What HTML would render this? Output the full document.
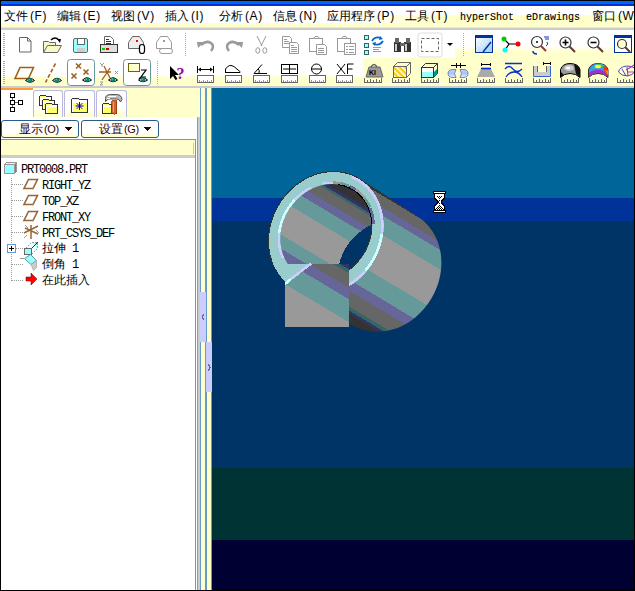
<!DOCTYPE html>
<html><head><meta charset="utf-8">
<style>
*{margin:0;padding:0;box-sizing:border-box}
html,body{width:635px;height:591px;overflow:hidden;background:#fff}
body{position:relative;font-family:"Liberation Sans",sans-serif;font-size:12px;color:#000}
.a{position:absolute}
.mi{position:absolute;top:9px;font-size:12px;line-height:14px;white-space:nowrap;letter-spacing:0.6px}
.mono{font-family:"Liberation Mono",monospace}
.tr{position:absolute;font-family:"Liberation Mono",monospace;font-size:12px;line-height:12px;letter-spacing:-1.2px;white-space:nowrap}
svg{position:absolute;overflow:visible}
.c{display:inline-block;width:12px;font-style:normal;text-align:center;letter-spacing:0}
</style></head><body>
<!-- frame -->
<div class="a" style="left:0;top:0;width:635px;height:1px;background:#000"></div>
<div class="a" style="left:1px;top:1px;width:633px;height:3px;background:#0066ff"></div>
<div class="a" style="left:1px;top:4px;width:633px;height:2px;background:#0033cc"></div>
<!-- menubar -->
<div class="a" style="left:1px;top:6px;width:633px;height:18px;background:#fff"></div>
<div class="a" style="left:1px;top:23px;width:633px;height:5px;background:#ffffcc"></div>
<div class="a" style="left:340px;top:15px;width:294px;height:8px;background:linear-gradient(90deg,rgba(255,255,204,0),#ffffcc 30%)"></div>
<div class="a" style="left:1px;top:27px;width:633px;height:1px;background:#ffdddd"></div>
<div class="a" style="left:1px;top:28px;width:633px;height:2px;background:#cccccc"></div>
<div class="mi" style="left:4px"><i class="c">文</i><i class="c">件</i><span style="margin-left:2px">(F)</span></div>
<div class="mi" style="left:57px"><i class="c">编</i><i class="c">辑</i><span style="margin-left:2px">(E)</span></div>
<div class="mi" style="left:111px"><i class="c">视</i><i class="c">图</i><span style="margin-left:2px">(V)</span></div>
<div class="mi" style="left:165px"><i class="c">插</i><i class="c">入</i><span style="margin-left:2px">(I)</span></div>
<div class="mi" style="left:219px"><i class="c">分</i><i class="c">析</i><span style="margin-left:2px">(A)</span></div>
<div class="mi" style="left:273px"><i class="c">信</i><i class="c">息</i><span style="margin-left:2px">(N)</span></div>
<div class="mi" style="left:327px"><i class="c">应</i><i class="c">用</i><i class="c">程</i><i class="c">序</i><span style="margin-left:2px">(P)</span></div>
<div class="mi" style="left:405px"><i class="c">工</i><i class="c">具</i><span style="margin-left:2px">(T)</span></div>
<div class="mi mono" style="left:460px;top:11px;font-size:10px;letter-spacing:0;-webkit-text-stroke:0.12px #000">hyperShot</div>
<div class="mi mono" style="left:526px;top:11px;font-size:10px;letter-spacing:0;-webkit-text-stroke:0.12px #000">eDrawings</div>
<div class="mi" style="left:592px"><i class="c">窗</i><i class="c">口</i><span style="margin-left:2px">(W)</span></div>
<!-- toolbars -->
<!-- TB -->
<svg style="left:0;top:0" width="635" height="88" viewBox="0 0 635 88">
<defs>
<linearGradient id="g1" x1="0" y1="0" x2="0" y2="1"><stop offset="0" stop-color="#fff"/><stop offset="0.55" stop-color="#fff"/><stop offset="0.8" stop-color="#ffffcc"/><stop offset="1" stop-color="#ffffcc"/></linearGradient>
<linearGradient id="g2" x1="0" y1="0" x2="0" y2="1"><stop offset="0" stop-color="#fff"/><stop offset="0.6" stop-color="#fff"/><stop offset="0.72" stop-color="#ffffcc"/><stop offset="1" stop-color="#ffffcc"/></linearGradient>
<linearGradient id="gb" x1="0" y1="0" x2="1" y2="1"><stop offset="0" stop-color="#fff"/><stop offset="1" stop-color="#99ccff"/></linearGradient>
<pattern id="chk" width="2" height="2" patternUnits="userSpaceOnUse"><rect width="2" height="2" fill="#ffff66"/><rect width="1" height="1" fill="#ffffcc"/><rect x="1" y="1" width="1" height="1" fill="#ffffcc"/></pattern>
<pattern id="hat" width="4" height="4" patternUnits="userSpaceOnUse" patternTransform="rotate(-45)"><rect width="4" height="4" fill="#ffcc00"/><rect width="1.6" height="4" fill="#fff"/></pattern>



</defs>
<!-- row1 bg -->
<rect x="1" y="30" width="454" height="28" fill="#fff"/>
<rect x="455" y="30" width="179" height="28" fill="url(#g1)"/>
<rect x="1" y="58" width="362" height="28" fill="url(#g2)"/>
<rect x="363" y="58" width="271" height="28" fill="#ffffcc"/>
<!-- grips / separators -->
<g fill="#cc9999">
<path d="M3,33h2v1h-2zM3,35h2v1h-2zM3,37h2v1h-2zM3,39h2v1h-2zM3,41h2v1h-2zM3,43h2v1h-2zM3,45h2v1h-2zM3,47h2v1h-2zM3,49h2v1h-2zM3,51h2v1h-2zM3,53h2v1h-2zM3,55h2v1h-2z"/>
<path d="M3,61h2v1h-2zM3,63h2v1h-2zM3,65h2v1h-2zM3,67h2v1h-2zM3,69h2v1h-2zM3,71h2v1h-2zM3,73h2v1h-2zM3,75h2v1h-2zM3,77h2v1h-2zM3,79h2v1h-2zM3,81h2v1h-2zM3,83h2v1h-2z"/>
<path d="M185,33h1v1h-1zM185,35h1v1h-1zM185,37h1v1h-1zM185,39h1v1h-1zM185,41h1v1h-1zM185,43h1v1h-1zM185,45h1v1h-1zM185,47h1v1h-1zM185,49h1v1h-1zM185,51h1v1h-1zM185,53h1v1h-1zM185,55h1v1h-1z"/>
<path d="M463,33h1v1h-1zM463,35h1v1h-1zM463,37h1v1h-1zM463,39h1v1h-1zM463,41h1v1h-1zM463,43h1v1h-1zM463,45h1v1h-1zM463,47h1v1h-1zM463,49h1v1h-1zM463,51h1v1h-1zM463,53h1v1h-1zM463,55h1v1h-1z"/>
<path d="M157,61h1v1h-1zM157,63h1v1h-1zM157,65h1v1h-1zM157,67h1v1h-1zM157,69h1v1h-1zM157,71h1v1h-1zM157,73h1v1h-1zM157,75h1v1h-1zM157,77h1v1h-1zM157,79h1v1h-1zM157,81h1v1h-1zM157,83h1v1h-1z"/>
</g>
<!-- ROW1 -->
<!-- new -->
<path d="M19.5,37.5h8l3.5,3.5v11h-11.5z" fill="#fff" stroke="#666"/><path d="M27.5,37.5v3.5h3.5" fill="none" stroke="#666"/>
<!-- open -->
<path d="M43.5,41.5h5l1,1h6v10h-12z" fill="url(#chk)" stroke="#666"/>
<path d="M43.5,52.5l4,-7h14l-4,7z" fill="url(#chk)" stroke="#666"/>
<path d="M51,40q4,-4 8,0" fill="none" stroke="#000" stroke-width="1.2"/><path d="M57,39l4,0l-1,4z" fill="#000"/>
<!-- save -->
<rect x="73.5" y="38.5" width="14" height="14" rx="1.5" fill="#99ffff" stroke="#666"/>
<rect x="77.5" y="38.5" width="7" height="6" fill="#fff" stroke="#666"/>
<rect x="77" y="48" width="8" height="4" fill="#ccc"/>
<!-- print -->
<path d="M104.5,36.5h6l3,3v6h-9z" fill="#fff" stroke="#666"/>
<path d="M106,39.5h3M106,41.5h5M106,43.5h5" stroke="#333"/>
<rect x="100.5" y="44.5" width="17" height="8" fill="#ddd" stroke="#333"/>
<rect x="102" y="48" width="3" height="2" fill="#00cc00"/><rect x="106" y="48" width="3" height="2" fill="#cc0000"/>
<!-- send -->
<path d="M128.5,42.5l4,-6h7l4,6v6h-15z" fill="#eee" stroke="#666"/>
<rect x="136" y="40" width="2" height="2" fill="#ff0000"/>
<rect x="139.5" y="44.5" width="5" height="9" rx="2.5" fill="#fff" stroke="#000" stroke-width="1.2"/>
<!-- grayed -->
<path d="M156.5,42.5l4,-6h7l4,6v6h-15z" fill="#fff" stroke="#999"/>
<rect x="163" y="40" width="2" height="2" fill="#999"/>
<rect x="159.5" y="48.5" width="13" height="5" rx="2.5" fill="#fff" stroke="#999"/>
<!-- undo / redo -->
<path d="M201,45q5,-5 10,-2q4,3 0,8" fill="none" stroke="#999" stroke-width="2.5"/><path d="M197,42l7,0l-6,6z" fill="#999"/>
<path d="M239,45q-5,-5 -10,-2q-4,3 0,8" fill="none" stroke="#999" stroke-width="2.5"/><path d="M243,42l-7,0l6,6z" fill="#999"/>
<!-- scissors -->
<path d="M257,36l5,10M266,36l-5,10" stroke="#999" stroke-width="1"/>
<ellipse cx="257.8" cy="50.5" rx="2" ry="2.8" fill="none" stroke="#999"/><ellipse cx="264.8" cy="50.5" rx="2" ry="2.8" fill="none" stroke="#999"/>
<!-- copy -->
<path d="M282.5,36.5h7l2,2v9h-9z" fill="#fff" stroke="#999"/><path d="M289.5,42.5h7l2,2v9h-9z" fill="#fff" stroke="#999"/>
<path d="M284,39.5h3M284,41.5h5M284,43.5h5M291,45.5h3M291,47.5h6M291,49.5h6M291,51.5h6" stroke="#999"/>
<!-- paste -->
<rect x="309.5" y="38.5" width="13" height="13" fill="#fff" stroke="#999"/><path d="M313.5,38.5l1.5,-2h3l1.5,2z" fill="#fff" stroke="#999"/>
<path d="M316.5,44.5h8l2,2v8h-10z" fill="#fff" stroke="#999"/><path d="M318,48.5h6M318,50.5h6M318,52.5h6" stroke="#999"/>
<rect x="337.5" y="38.5" width="13" height="13" fill="#fff" stroke="#999"/><path d="M341.5,38.5l1.5,-2h3l1.5,2z" fill="#fff" stroke="#999"/>
<rect x="344.5" y="43.5" width="11" height="11" fill="#fff" stroke="#999"/><path d="M346,46.5h2M346,49.5h2M346,52.5h2M349,46.5h5M349,49.5h5M349,52.5h5" stroke="#999"/>
<!-- regen -->
<rect x="364.5" y="35.5" width="4" height="4" fill="#99ffff" stroke="#336666"/><rect x="364.5" y="43.5" width="4" height="4" fill="#99ffff" stroke="#336666"/><rect x="364.5" y="50.5" width="4" height="4" fill="#99ffff" stroke="#336666"/>
<path d="M372,41q3,-5 9,-3M383,41q-3,5 -9,3" fill="none" stroke="#0066cc" stroke-width="1.8"/>
<path d="M380,36l3,3l-4,1zM375,46l-3,-3l4,-1z" fill="#0066cc"/>
<path d="M373,47.5h8M373,49.5h6M373,51.5h8" stroke="#999"/>
<!-- binoculars -->
<path d="M394,42h7v10h-7zM404,42h7v10h-7z" fill="#333"/>
<path d="M395,38h4v5h-4zM406,38h4v5h-4zM400,43h5v3h-5z" fill="#666"/>
<path d="M395,44h2v7h-2zM405,44h2v7h-2z" fill="#ccc"/>
<!-- select box -->
<rect x="418" y="33" width="24" height="24" rx="2.5" fill="#fff" stroke="#ddd"/>
<rect x="421.5" y="38.5" width="17" height="13" fill="none" stroke="#666" stroke-dasharray="3,2"/>
<path d="M447,43h6l-3,3z" fill="#000"/>
<!-- repaint -->
<rect x="475.5" y="35.5" width="17" height="17" fill="url(#gb)" stroke="#003399"/>
<rect x="476" y="36" width="16" height="2" fill="#003399"/>
<path d="M483,52l8,-10" stroke="#003399" stroke-width="1.5"/>
<path d="M480,41h1M482,43h1M479,45h1M484,45h1M481,47h1M486,42h1" stroke="#fff"/>
<!-- spin center -->
<path d="M504,39l5,5l-4,6M509,44h9" stroke="#000" stroke-width="1.2" fill="none"/>
<circle cx="504" cy="39" r="2.5" fill="#00cc00"/><circle cx="518" cy="44" r="2.5" fill="#ff0000"/><circle cx="505" cy="50" r="2.5" fill="#00ffff"/>
<!-- orient -->
<circle cx="537" cy="42" r="5.5" fill="#fff" stroke="#333" stroke-width="1.2"/><circle cx="537" cy="42" r="1" fill="#000"/>
<path d="M541,46l5,5" stroke="#993333" stroke-width="2"/>
<path d="M544,37h5M545,39h4M547,42q2,2 -1,4" stroke="#0033cc" fill="none"/>
<path d="M533,51q0,3 4,3" stroke="#0033cc" fill="none" stroke-width="1.5"/>
<!-- zoom in/out -->
<circle cx="565.5" cy="42.5" r="5.5" fill="#fff" stroke="#333" stroke-width="1.2"/><path d="M562.5,42.5h6M565.5,39.5v6" stroke="#000" stroke-width="1.6"/><path d="M569.5,46.5l5.5,5.5" stroke="#663333" stroke-width="2"/>
<circle cx="593.5" cy="42.5" r="5.5" fill="#fff" stroke="#333" stroke-width="1.2"/><path d="M590.5,42.5h6" stroke="#000" stroke-width="1.6"/><path d="M597.5,46.5l5.5,5.5" stroke="#663333" stroke-width="2"/>
<!-- fit -->
<rect x="614.5" y="35.5" width="17" height="17" fill="#fff" stroke="#003399"/><rect x="615" y="36" width="16" height="2" fill="#003399"/>
<circle cx="622" cy="44" r="4.5" fill="#ffffcc" stroke="#333" stroke-width="1.2"/><path d="M625,47l5,5" stroke="#663333" stroke-width="2"/>
<!-- ROW2 -->
<!-- plane -->
<path d="M20,67.5h13.5l-5,11h-13.5z" fill="none" stroke="#a0601a" stroke-width="1.6"/>
<g transform="translate(25,77.5)"><path d="M0.5,3q4.5,-4.5 9,0q-4.5,3.5 -9,0z" fill="#ccc" stroke="#000" stroke-width="1"/><circle cx="5" cy="2.8" r="2.3" fill="#008877"/><circle cx="4.3" cy="2.2" r="0.7" fill="#66ccaa"/></g>
<!-- axis -->
<path d="M55.5,63.5l-10,19" stroke="#a0601a" stroke-width="1.6" stroke-dasharray="4,2"/>
<g transform="translate(52,77.5)"><path d="M0.5,3q4.5,-4.5 9,0q-4.5,3.5 -9,0z" fill="#ccc" stroke="#000" stroke-width="1"/><circle cx="5" cy="2.8" r="2.3" fill="#008877"/><circle cx="4.3" cy="2.2" r="0.7" fill="#66ccaa"/></g>
<!-- point btn -->
<rect x="67.5" y="59.5" width="27" height="26" rx="3" fill="#fff" stroke="#669999"/>
<path d="M76,63.5l5,5M81,63.5l-5,5M71.5,73.5l5,5M76.5,73.5l-5,5M83.5,69.5l5,5M88.5,69.5l-5,5" stroke="#a0601a" stroke-width="1.6"/>
<g transform="translate(82,77)"><path d="M0.5,3q4.5,-4.5 9,0q-4.5,3.5 -9,0z" fill="#ccc" stroke="#000" stroke-width="1"/><circle cx="5" cy="2.8" r="2.3" fill="#008877"/><circle cx="4.3" cy="2.2" r="0.7" fill="#66ccaa"/></g>
<!-- csys -->
<path d="M99,72h12M102,80l8,-12M104,66l6,12" stroke="#a0601a" stroke-width="1.3"/>
<path d="M100,63l2,2l2,-2M102,65v2M100,82h3l-3,3h3M115,71l3,3M118,71l-3,3" stroke="#999" fill="none"/>
<g transform="translate(108,77)"><path d="M0.5,3q4.5,-4.5 9,0q-4.5,3.5 -9,0z" fill="#ccc" stroke="#000" stroke-width="1"/><circle cx="5" cy="2.8" r="2.3" fill="#008877"/><circle cx="4.3" cy="2.2" r="0.7" fill="#66ccaa"/></g>
<!-- annot btn -->
<rect x="123.5" y="59.5" width="27" height="26" rx="3" fill="#fff" stroke="#669999"/>
<rect x="128.5" y="63.5" width="11" height="8" fill="#ffffcc" stroke="#666600"/>
<path d="M141,70h5l-5,7h5M141,77l-2,2" stroke="#000" fill="none" stroke-width="1.2"/>
<g transform="translate(138,77)"><path d="M0.5,3q4.5,-4.5 9,0q-4.5,3.5 -9,0z" fill="#ccc" stroke="#000" stroke-width="1"/><circle cx="5" cy="2.8" r="2.3" fill="#008877"/><circle cx="4.3" cy="2.2" r="0.7" fill="#66ccaa"/></g>
<!-- ? -->
<path d="M170,66v13l3,-3l2.5,4l2,-1l-2.5,-4h4z" fill="#000"/>
<text x="176.5" y="78.5" font-family="Liberation Serif" font-weight="bold" font-size="16" fill="#990099">?</text>
<!-- rulers -->
<g transform="translate(197,75)"><rect x="0.5" y="0.5" width="16" height="7" fill="#fff" stroke="#666"/><path d="M2.5,7v-2M4.5,7v-1M6.5,7v-2M8.5,7v-1M10.5,7v-2M12.5,7v-1M14.5,7v-2" stroke="#999" stroke-width="1"/></g><g transform="translate(225,75)"><rect x="0.5" y="0.5" width="16" height="7" fill="#fff" stroke="#666"/><path d="M2.5,7v-2M4.5,7v-1M6.5,7v-2M8.5,7v-1M10.5,7v-2M12.5,7v-1M14.5,7v-2" stroke="#999" stroke-width="1"/></g><g transform="translate(253,75)"><rect x="0.5" y="0.5" width="16" height="7" fill="#fff" stroke="#666"/><path d="M2.5,7v-2M4.5,7v-1M6.5,7v-2M8.5,7v-1M10.5,7v-2M12.5,7v-1M14.5,7v-2" stroke="#999" stroke-width="1"/></g><g transform="translate(281,75)"><rect x="0.5" y="0.5" width="16" height="7" fill="#fff" stroke="#666"/><path d="M2.5,7v-2M4.5,7v-1M6.5,7v-2M8.5,7v-1M10.5,7v-2M12.5,7v-1M14.5,7v-2" stroke="#999" stroke-width="1"/></g><g transform="translate(309,75)"><rect x="0.5" y="0.5" width="16" height="7" fill="#fff" stroke="#666"/><path d="M2.5,7v-2M4.5,7v-1M6.5,7v-2M8.5,7v-1M10.5,7v-2M12.5,7v-1M14.5,7v-2" stroke="#999" stroke-width="1"/></g><g transform="translate(336,75)"><rect x="0.5" y="0.5" width="16" height="7" fill="#fff" stroke="#666"/><path d="M2.5,7v-2M4.5,7v-1M6.5,7v-2M8.5,7v-1M10.5,7v-2M12.5,7v-1M14.5,7v-2" stroke="#999" stroke-width="1"/></g>
<path d="M197.5,66v7M213.5,66v7M199,69.5h13" stroke="#000" fill="none"/><path d="M198,69.5l3,-2v4zM213,69.5l-3,-2v4z" fill="#000"/>
<path d="M225.5,73v-4q4,-6 9,-2l6,5M226,72.5h14" stroke="#000" fill="none"/>
<path d="M254,73.5h13M254,73.5l8,-9" stroke="#000" fill="none"/><path d="M259,73q1,-3 -1,-4" stroke="#000" fill="none"/>
<rect x="281.5" y="64.5" width="16" height="9" fill="#fff" stroke="#000"/><path d="M289.5,64.5v9M283,69h13" stroke="#000"/>
<circle cx="316.5" cy="69" r="5" fill="none" stroke="#000"/><path d="M311.5,69h10" stroke="#000"/>
<path d="M337,64l8,10M345,64l-8,10M347.5,64v10M347.5,64h6M347.5,69h5" stroke="#000" fill="none"/>
<!-- weight -->
<path d="M366,77l3,-10h11l3,10z" fill="#999" stroke="#666"/><path d="M371,67q3,-5 6,0" fill="none" stroke="#666" stroke-width="1.5"/>
<text x="369" y="75" font-family="Liberation Sans" font-weight="bold" font-size="7" fill="#000">KI</text>
<g transform="translate(364,78)"><path d="M0.5,0v4M0,4.5h18M3.5,2v2M6.5,1v3M9.5,2v2M12.5,1v3M15.5,2v2M17.5,0v4" stroke="#666" stroke-width="1" fill="none"/></g>
<!-- hatched cube -->
<rect x="393.5" y="66.5" width="13" height="11" fill="url(#hat)" stroke="#666"/>
<path d="M393.5,66.5l4,-4h13v11l-4,4M406.5,66.5l4,-4" fill="none" stroke="#666"/>
<g transform="translate(392,78)"><path d="M0.5,0v4M0,4.5h18M3.5,2v2M6.5,1v3M9.5,2v2M12.5,1v3M15.5,2v2M17.5,0v4" stroke="#666" stroke-width="1" fill="none"/></g>
<!-- cube cyan -->
<rect x="421.5" y="67.5" width="12" height="10" fill="#fff" stroke="#333"/><rect x="422" y="72" width="11" height="5" fill="#99ffff"/>
<path d="M421.5,67.5l4,-4h12v10l-4,4M433.5,67.5l4,-4" fill="none" stroke="#333"/><path d="M434,72l3,-3v5l-3,3z" fill="#009999"/>
<g transform="translate(421,78)"><path d="M0.5,0v4M0,4.5h18M3.5,2v2M6.5,1v3M9.5,2v2M12.5,1v3M15.5,2v2M17.5,0v4" stroke="#666" stroke-width="1" fill="none"/></g>
<!-- clearance -->
<defs><linearGradient id="lb" x1="0" y1="0" x2="0" y2="1"><stop offset="0" stop-color="#ccccff"/><stop offset="0.5" stop-color="#99ccff"/><stop offset="1" stop-color="#eeeeff"/></linearGradient></defs>
<path d="M456,69.5h-3q-5,0 -5,4q0,4 5,4h3q-3,-4 0,-8z" fill="url(#lb)" stroke="#666699" stroke-width="0.8"/>
<path d="M460,69.5h3q5,0 5,4q0,4 -5,4h-3q3,-4 0,-8z" fill="url(#lb)" stroke="#666699" stroke-width="0.8"/>
<path d="M451,65.5h15M456.5,63v5M460.5,63v5" stroke="#000"/>
<g transform="translate(449,78)"><path d="M0.5,0v4M0,4.5h18M3.5,2v2M6.5,1v3M9.5,2v2M12.5,1v3M15.5,2v2M17.5,0v4" stroke="#666" stroke-width="1" fill="none"/></g>
<!-- draft -->
<path d="M481,69h10l4,8h-18z" fill="#aaa"/><path d="M481,68.5h10" stroke="#0033cc" stroke-width="1.6"/><path d="M481.5,63v3M490.5,63v3M481,64.5h10" stroke="#000"/>
<g transform="translate(477,78)"><path d="M0.5,0v4M0,4.5h18M3.5,2v2M6.5,1v3M9.5,2v2M12.5,1v3M15.5,2v2M17.5,0v4" stroke="#666" stroke-width="1" fill="none"/></g>
<!-- curvature -->
<path d="M505,63.5h17M505,69q4,-5 8,0t9,0M506,77q3,-5 8,-5q5,0 8,5" stroke="#0033cc" fill="none" stroke-width="1.3"/>
<g transform="translate(505,78)"><path d="M0.5,0v4M0,4.5h18M3.5,2v2M6.5,1v3M9.5,2v2M12.5,1v3M15.5,2v2M17.5,0v4" stroke="#666" stroke-width="1" fill="none"/></g>
<!-- pocket -->
<path d="M534,66h4v6h8v-6h4v11h-16z" fill="#ccc"/><path d="M533.5,66v10.5h17v-10.5" stroke="#3366cc" fill="none"/><path d="M537.5,66v6M546.5,66v6" stroke="#666"/>
<path d="M543,63.5h8M543.5,62v3M550.5,62v3" stroke="#000"/>
<g transform="translate(533,78)"><path d="M0.5,0v4M0,4.5h18M3.5,2v2M6.5,1v3M9.5,2v2M12.5,1v3M15.5,2v2M17.5,0v4" stroke="#666" stroke-width="1" fill="none"/></g>
<!-- sphere -->
<path d="M560.5,77.5v-8q2,-6 9.5,-6q8,0 10,6v8q-4,-4 -10,-4q-6,0 -9.5,4z" fill="#999" stroke="#000"/>
<ellipse cx="569" cy="68" rx="5" ry="3" fill="#ccc"/><ellipse cx="568" cy="68" rx="2" ry="1.3" fill="#fff"/>
<path d="M574,64q5,1 6,5v8l-4,-3z" fill="#111"/><path d="M561,72l3,3l-3,2z" fill="#111"/>
<g transform="translate(561,78)"><path d="M0.5,0v4M0,4.5h18M3.5,2v2M6.5,1v3M9.5,2v2M12.5,1v3M15.5,2v2M17.5,0v4" stroke="#666" stroke-width="1" fill="none"/></g>
<!-- rainbow -->
<path d="M588.5,77.5v-8q2,-6 9.5,-6q8,0 10,6v8q-4,-4 -10,-4q-6,0 -9.5,4z" fill="#9933cc" stroke="#333"/>
<path d="M589,71q1,-7 9,-7.5q7,0 9.5,6l-1,3q-5,-3 -8,-3q-5,0 -9.5,3z" fill="#3399ff"/>
<path d="M592,69q2,-5 7,-5q5,0 7,4q-4,-1 -7,-1q-4,0 -7,2z" fill="#33cc66"/>
<ellipse cx="598" cy="66.5" rx="3" ry="1.8" fill="#ffff33"/>
<path d="M603,66q4,1 5,4v6l-3,-3z" fill="#ff3300"/><path d="M605,70l3,1v4z" fill="#ff9900"/>
<g transform="translate(589,78)"><path d="M0.5,0v4M0,4.5h18M3.5,2v2M6.5,1v3M9.5,2v2M12.5,1v3M15.5,2v2M17.5,0v4" stroke="#666" stroke-width="1" fill="none"/></g>
<!-- wire -->
<path d="M618.5,72q1,-5 8,-6q6,0 8,2M618.5,72q3,4 9,4q5,-1 7,-4M622,69l4,7M627,67l1,9" stroke="#3333cc" fill="none" stroke-width="0.9"/>
<path d="M626,70q4,-2 8,-5M628,72h6" stroke="#cc33cc" fill="none" stroke-width="1.2"/>
<g transform="translate(617,78)"><path d="M0.5,0v4M0,4.5h18M3.5,2v2M6.5,1v3M9.5,2v2M12.5,1v3M15.5,2v2M17.5,0v4" stroke="#666" stroke-width="1" fill="none"/></g>
</svg>

<!-- /TB -->
<div class="a" style="left:1px;top:86px;width:633px;height:2px;background:#cccccc"></div>

<!-- left panel -->
<div class="a" style="left:1px;top:88px;width:198px;height:502px;background:#ffffcc"></div>
<div class="a" style="left:1px;top:117px;width:196px;height:473px;background:#fff"></div>
<div class="a" style="left:197px;top:117px;width:1px;height:473px;background:#999"></div>
<div class="a" style="left:198px;top:117px;width:1px;height:473px;background:#ccc"></div>
<!-- yellow bar -->
<div class="a" style="left:1px;top:139px;width:195px;height:16px;background:#ffffcc;border-top:1px solid #6699cc;border-right:1px solid #6699cc"></div>
<div class="a" style="left:1px;top:155px;width:194px;height:3px;background:#cccccc"></div>
<div class="a" style="left:195px;top:155px;width:1px;height:435px;background:#6699cc"></div>

<!-- LEFT -->
<!-- tabs -->
<div class="a" style="left:1px;top:88px;width:32px;height:2px;background:#ff9933"></div>
<div class="a" style="left:1px;top:90px;width:32px;height:27px;background:#fff"></div>
<div class="a" style="left:33px;top:90px;width:30px;height:27px;background:linear-gradient(#fff 60%,#ffffcc);border:1px solid #b8b8e0;border-bottom:none;border-radius:3px 3px 0 0"></div>
<div class="a" style="left:64px;top:90px;width:31px;height:27px;background:linear-gradient(#fff 60%,#ffffcc);border:1px solid #b8b8e0;border-bottom:none;border-radius:3px 3px 0 0"></div>
<div class="a" style="left:96px;top:90px;width:31px;height:27px;background:linear-gradient(#fff 60%,#ffffcc);border:1px solid #b8b8e0;border-bottom:none;border-radius:3px 3px 0 0"></div>
<svg style="left:0;top:86px" width="130" height="32" shape-rendering="crispEdges">
<g fill="#fff" stroke="#000" stroke-width="1">
<rect x="10.5" y="7.5" width="4" height="4"/><rect x="10.5" y="14.5" width="4" height="4"/><rect x="18.5" y="14.5" width="4" height="4"/><rect x="10.5" y="21.5" width="4" height="4"/></g>
<path d="M12.5,12v2M12.5,19v2M15,16.5h3" stroke="#666" stroke-width="1"/>
<!-- tab2 folders -->
<g stroke="#333" stroke-width="1">
<path d="M39.5,10.5l1.5,-1.5h4l1.5,1.5h4.5v9h-11.5z" fill="#ffff66"/>
<path d="M42.5,14.5l1.5,-1.5h4l1.5,1.5h4.5v9h-11.5z" fill="#ffff66"/>
<path d="M45.5,18.5l1.5,-1.5h4l1.5,1.5h4.5v9h-11.5z" fill="#ffff66"/>
<path d="M71.5,13.5l1.5,-1.5h5l1.5,1.5h7.5v13h-15.5z" fill="#ffff66"/>
<path d="M102.5,18.5l1.5,-1.5h4l1.5,1.5h1.5v9h-8.5z" fill="#ffff66"/>
</g>
<path d="M40,11h11v2h-11zM40,13h1v6h-1zM43,15h11v2h-11zM43,17h1v6h-1zM46,19h11v2h-11zM46,21h1v6h-1zM72,14h15v3h-15zM72,17h1v9h-1zM103,19h8v2h-8zM103,21h1v6h-1z" fill="#fff"/>
<path d="M79.5,16v8M75.5,20h8M76.7,17.2l5.6,5.6M82.3,17.2l-5.6,5.6" stroke="#0000cc" stroke-width="1" shape-rendering="auto"/>
<path d="M105.5,15.5v-3q0,-4 5,-4h6q5,0 5.5,5l-1.5,2.5q-1,-3 -4,-3h-8z" fill="#bbb" stroke="#444" stroke-width="0.9" shape-rendering="auto"/>
<path d="M108,10.5h8M107,12.5h3" stroke="#fff" stroke-width="1"/>
<path d="M111.5,14.5h5v13q-2.5,2 -5,0z" fill="#cc6633" stroke="#993300" stroke-width="0.8"/>
<path d="M113,16v10" stroke="#ff9966" stroke-width="1"/>
</svg>
<!-- buttons -->
<div class="a" style="left:1px;top:120px;width:78px;height:18px;border:1px solid #2a5a8a;border-radius:3px;background:linear-gradient(#fff 70%,#ffffcc)"></div>
<div class="a" style="left:81px;top:120px;width:78px;height:18px;border:1px solid #2a5a8a;border-radius:3px;background:linear-gradient(#fff 70%,#ffffcc)"></div>
<div class="a" style="left:19px;top:122px;font-size:12px;line-height:14px;color:#330000;white-space:nowrap"><i class="c">显</i><i class="c">示</i><span style="margin-left:1px;font-size:11px;letter-spacing:-0.3px">(O)</span></div>
<div class="a" style="left:99px;top:122px;font-size:12px;line-height:14px;color:#330000;white-space:nowrap"><i class="c">设</i><i class="c">置</i><span style="margin-left:1px;font-size:11px;letter-spacing:-0.3px">(G)</span></div>
<svg style="left:0;top:120px" width="160" height="18" shape-rendering="crispEdges"><path d="M65,7h7l-3.5,4z M144,7h7l-3.5,4z" fill="#330000"/></svg>
<!-- tree -->
<svg style="left:0;top:158px" width="60" height="132" shape-rendering="crispEdges">
<path d="M4.5,6.5l2,-2h10l-2,2z" fill="#eeeeee" stroke="#999"/>
<path d="M14.5,6.5l2,-2v9l-2,2z" fill="#339999" stroke="#999"/>
<rect x="4.5" y="6.5" width="10" height="9" fill="#99ffff" stroke="#999"/>
<g fill="#999">
<rect x="11" y="20" width="1" height="1"/><rect x="11" y="22" width="1" height="1"/><rect x="11" y="24" width="1" height="1"/><rect x="11" y="26" width="1" height="1"/><rect x="11" y="28" width="1" height="1"/><rect x="11" y="30" width="1" height="1"/><rect x="11" y="32" width="1" height="1"/><rect x="11" y="34" width="1" height="1"/><rect x="11" y="36" width="1" height="1"/><rect x="11" y="38" width="1" height="1"/><rect x="11" y="40" width="1" height="1"/><rect x="11" y="42" width="1" height="1"/><rect x="11" y="44" width="1" height="1"/><rect x="11" y="46" width="1" height="1"/><rect x="11" y="48" width="1" height="1"/><rect x="11" y="50" width="1" height="1"/><rect x="11" y="52" width="1" height="1"/><rect x="11" y="54" width="1" height="1"/><rect x="11" y="56" width="1" height="1"/><rect x="11" y="58" width="1" height="1"/><rect x="11" y="60" width="1" height="1"/><rect x="11" y="62" width="1" height="1"/><rect x="11" y="64" width="1" height="1"/><rect x="11" y="66" width="1" height="1"/><rect x="11" y="68" width="1" height="1"/><rect x="11" y="70" width="1" height="1"/><rect x="11" y="72" width="1" height="1"/><rect x="11" y="74" width="1" height="1"/><rect x="11" y="76" width="1" height="1"/><rect x="11" y="78" width="1" height="1"/><rect x="11" y="80" width="1" height="1"/><rect x="11" y="82" width="1" height="1"/><rect x="11" y="84" width="1" height="1"/><rect x="11" y="86" width="1" height="1"/><rect x="11" y="88" width="1" height="1"/><rect x="11" y="90" width="1" height="1"/><rect x="11" y="92" width="1" height="1"/><rect x="11" y="94" width="1" height="1"/><rect x="11" y="96" width="1" height="1"/><rect x="11" y="98" width="1" height="1"/><rect x="11" y="100" width="1" height="1"/><rect x="11" y="102" width="1" height="1"/><rect x="11" y="104" width="1" height="1"/><rect x="11" y="106" width="1" height="1"/><rect x="11" y="108" width="1" height="1"/><rect x="11" y="110" width="1" height="1"/><rect x="11" y="112" width="1" height="1"/><rect x="11" y="114" width="1" height="1"/><rect x="11" y="116" width="1" height="1"/><rect x="11" y="118" width="1" height="1"/><rect x="11" y="120" width="1" height="1"/><rect x="11" y="122" width="1" height="1"/><rect x="12" y="26" width="1" height="1"/><rect x="14" y="26" width="1" height="1"/><rect x="16" y="26" width="1" height="1"/><rect x="18" y="26" width="1" height="1"/><rect x="20" y="26" width="1" height="1"/><rect x="22" y="26" width="1" height="1"/><rect x="12" y="42" width="1" height="1"/><rect x="14" y="42" width="1" height="1"/><rect x="16" y="42" width="1" height="1"/><rect x="18" y="42" width="1" height="1"/><rect x="20" y="42" width="1" height="1"/><rect x="22" y="42" width="1" height="1"/><rect x="12" y="58" width="1" height="1"/><rect x="14" y="58" width="1" height="1"/><rect x="16" y="58" width="1" height="1"/><rect x="18" y="58" width="1" height="1"/><rect x="20" y="58" width="1" height="1"/><rect x="22" y="58" width="1" height="1"/><rect x="12" y="74" width="1" height="1"/><rect x="14" y="74" width="1" height="1"/><rect x="16" y="74" width="1" height="1"/><rect x="18" y="74" width="1" height="1"/><rect x="20" y="74" width="1" height="1"/><rect x="22" y="74" width="1" height="1"/><rect x="16" y="90" width="1" height="1"/><rect x="18" y="90" width="1" height="1"/><rect x="20" y="90" width="1" height="1"/><rect x="22" y="90" width="1" height="1"/><rect x="12" y="106" width="1" height="1"/><rect x="14" y="106" width="1" height="1"/><rect x="16" y="106" width="1" height="1"/><rect x="18" y="106" width="1" height="1"/><rect x="20" y="106" width="1" height="1"/><rect x="22" y="106" width="1" height="1"/><rect x="12" y="122" width="1" height="1"/><rect x="14" y="122" width="1" height="1"/><rect x="16" y="122" width="1" height="1"/><rect x="18" y="122" width="1" height="1"/><rect x="20" y="122" width="1" height="1"/><rect x="22" y="122" width="1" height="1"/></g>
<g fill="none" stroke="#996633" stroke-width="1.6" shape-rendering="auto">
<path d="M28.5,21.5h9l-4.5,9h-9z"/><path d="M28.5,37.5h9l-4.5,9h-9z"/><path d="M28.5,53.5h9l-4.5,9h-9z"/>
<path d="M24,75l14,-7M31,67v14M25,70l13,6" stroke-width="1.5"/>
</g>
<g fill="none" stroke="#999" stroke-width="1"><path d="M25,67l3,3M36,72l3,3M24,80l3,-3"/></g>
<rect x="7.5" y="86.5" width="8" height="8" fill="#fff" stroke="#6699cc"/>
<path d="M9,90.5h5M11.5,88v5" stroke="#000"/>
<path d="M25.5,90.5l6,-6h6v6l-6,6z" fill="#eeffff" stroke="#999" stroke-dasharray="2,1"/>
<path d="M32,85l5,0v5z" fill="#99ffff"/>
<path d="M31.5,90.5l6,-6" stroke="#333" fill="none"/>
<rect x="24.5" y="90.5" width="7" height="6" fill="#99ffff" stroke="#666"/>
<path d="M24.5,100.5l6,-4l6,6l-5.5,4z" fill="#99ffff" stroke="#669999" shape-rendering="auto"/>
<path d="M31,106.5l5.5,-4v7l-3,3z" fill="#cccccc" stroke="#999" stroke-width="0.6" shape-rendering="auto"/>
<path d="M20,100.5h4" stroke="#999"/>
<path d="M26,119h5v-4l6,6l-6,6v-4h-5z" fill="#ff0000" stroke="#660000" stroke-width="0.5" shape-rendering="auto"/>
</svg>
<div class="tr" style="left:21px;top:164px">PRT0008.PRT</div>
<div class="tr" style="left:42px;top:180px">RIGHT_YZ</div>
<div class="tr" style="left:42px;top:196px">TOP_XZ</div>
<div class="tr" style="left:42px;top:212px">FRONT_XY</div>
<div class="tr" style="left:42px;top:228px">PRT_CSYS_DEF</div>
<div class="tr" style="left:42px;top:242px"><span style="font-family:'Liberation Sans',sans-serif;font-size:12px"><i class="c">拉</i><i class="c">伸</i></span> 1</div>
<div class="tr" style="left:42px;top:258px"><span style="font-family:'Liberation Sans',sans-serif;font-size:12px"><i class="c">倒</i><i class="c">角</i></span> 1</div>
<div class="tr" style="left:42px;top:274px"><span style="font-family:'Liberation Sans',sans-serif;font-size:12px"><i class="c">在</i><i class="c">此</i><i class="c">插</i><i class="c">入</i></span></div>
<!-- /LEFT -->
<div class="a" style="left:193px;top:143px;width:1px;height:11px;background:#cccc99"></div>
<!-- splitter -->
<div class="a" style="left:199px;top:88px;width:12px;height:502px;background:#ffffcc"></div>
<div class="a" style="left:200px;top:88px;width:1px;height:502px;background:#6699cc"></div>
<div class="a" style="left:205px;top:88px;width:2px;height:502px;background:#6699cc"></div>
<div class="a" style="left:211px;top:88px;width:1px;height:502px;background:#6699cc"></div>

<!-- viewport -->
<div class="a" style="left:212px;top:88px;width:422px;height:110px;background:#006699"></div>
<div class="a" style="left:212px;top:198px;width:422px;height:23px;background:#003399"></div>
<div class="a" style="left:212px;top:221px;width:422px;height:247px;background:#003366"></div>
<div class="a" style="left:212px;top:468px;width:422px;height:72px;background:#003333"></div>
<div class="a" style="left:212px;top:540px;width:422px;height:50px;background:#000033"></div>

<!-- OBJ -->
<svg width="635" height="591" style="left:0;top:0" viewBox="0 0 635 591" shape-rendering="crispEdges">
<defs>
<clipPath id="cb"><path d="M358.8,178.7 L416.4,215.7 A55.2,63.6 30.7 0 1 351.4,325.1 L293.8,288.1 A55.2,63.6 30.7 0 1 358.8,178.7 Z"/></clipPath>
<clipPath id="ci"><ellipse cx="326.2" cy="232.1" rx="43.5" ry="50.4" transform="rotate(35.4 326.2 232.1)"/></clipPath>
<clipPath id="ck"><polygon points="285,285 290,280 310.5,264 349,264 349,327 285,327"/></clipPath>
</defs>
<g clip-path="url(#cb)">
<polygon fill="#333333" points="255.0,-47.0 450.0,70.0 450.0,236.0 255.0,119.0"/>
<polygon fill="#666666" points="255.0,119.0 450.0,236.0 450.0,248.0 255.0,131.0"/>
<polygon fill="#666699" points="255.0,131.0 450.0,248.0 450.0,256.0 255.0,139.0"/>
<polygon fill="#669999" points="255.0,139.0 450.0,256.0 450.0,275.5 255.0,158.5"/>
<polygon fill="#999999" points="255.0,158.5 450.0,275.5 450.0,319.0 255.0,202.0"/>
<polygon fill="#669999" points="255.0,202.0 450.0,319.0 450.0,340.0 255.0,223.0"/>
<polygon fill="#666699" points="255.0,223.0 450.0,340.0 450.0,351.0 255.0,234.0"/>
<polygon fill="#666666" points="255.0,234.0 450.0,351.0 450.0,367.0 255.0,250.0"/>
<polygon fill="#336666" points="255.0,250.0 450.0,367.0 450.0,371.0 255.0,254.0"/>
<polygon fill="#333366" points="255.0,254.0 450.0,371.0 450.0,374.0 255.0,257.0"/>
<polygon fill="#333333" points="255.0,257.0 450.0,374.0 450.0,570.0 255.0,453.0"/>
</g>
<path fill="none" d="M358.8,178.7 L416.4,215.7" stroke="#333333" stroke-width="1"/>
<ellipse cx="326.3" cy="233.4" rx="55.2" ry="63.6" transform="rotate(30.7 326.3 233.4)" fill="#99cccc"/>
<g clip-path="url(#ci)">
<polygon fill="#333333" points="255.0,-47.0 450.0,70.0 450.0,258.0 255.0,141.0"/>
<polygon fill="#333366" points="255.0,141.0 450.0,258.0 450.0,261.0 255.0,144.0"/>
<polygon fill="#336666" points="255.0,144.0 450.0,261.0 450.0,263.7 255.0,146.7"/>
<polygon fill="#666666" points="255.0,146.7 450.0,263.7 450.0,276.1 255.0,159.1"/>
<polygon fill="#666699" points="255.0,159.1 450.0,276.1 450.0,284.8 255.0,167.8"/>
<polygon fill="#669999" points="255.0,167.8 450.0,284.8 450.0,301.6 255.0,184.6"/>
<polygon fill="#999999" points="255.0,184.6 450.0,301.6 450.0,335.8 255.0,218.8"/>
<polygon fill="#669999" points="255.0,218.8 450.0,335.8 450.0,350.0 255.0,233.0"/>
<polygon fill="#666699" points="255.0,233.0 450.0,350.0 450.0,360.0 255.0,243.0"/>
<polygon fill="#666666" points="255.0,243.0 450.0,360.0 450.0,570.0 255.0,453.0"/>
<ellipse cx="383.8" cy="269.1" rx="43.5" ry="50.4" transform="rotate(35.4 383.8 269.1)" fill="#003366"/>
</g>
<polyline fill="none" stroke="#333333" stroke-width="1" stroke-linejoin="round" points="272.6,263.1 272.4,262.6 272.2,262.2 272.0,261.7 271.9,261.2 271.7,260.7 271.5,260.2 271.4,259.7 271.2,259.3 271.1,258.8 270.9,258.3 270.8,257.8 270.6,257.3 270.5,256.8 270.4,256.3 270.2,255.8 270.1,255.3 270.0,254.8 269.9,254.3 269.8,253.8 269.7,253.2 269.6,252.7 269.5,252.2 269.4,251.7 269.3,251.2 269.2,250.7 269.1,250.1 269.1,249.6 269.0,249.1 268.9,248.6 268.9,248.1 268.8,247.5 268.8,247.0 268.7,246.5 268.7,246.0 268.6,245.4 268.6,244.9 268.6,244.4 268.6,243.8 268.5,243.3 268.5,242.8 268.5,242.2 268.5,241.7 268.5,241.2 268.5,240.6 268.5,240.1 268.5,239.6 268.5,239.0 268.5,238.5 268.6,237.9 268.6,237.4 268.6,236.9 268.7,236.3 268.7,235.8 268.7,235.3 268.8,234.7 268.8,234.2 268.9,233.6 269.0,233.1 269.0,232.6 269.1,232.0 269.2,231.5 269.3,230.9 269.3,230.4 269.4,229.9 269.5,229.3 269.6,228.8 269.7,228.2 269.8,227.7 269.9,227.2 270.1,226.6 270.2,226.1 270.3,225.6 270.4,225.0 270.6,224.5 270.7,224.0 270.8,223.4 271.0,222.9 271.1,222.4 271.3,221.8 271.4,221.3 271.6,220.8 271.8,220.3 271.9,219.7 272.1,219.2 272.3,218.7 272.5,218.2 272.6,217.6 272.8,217.1 273.0,216.6 273.2,216.1 273.4,215.6 273.6,215.0 273.8,214.5 274.1,214.0 274.3,213.5 274.5,213.0 274.7,212.5 275.0,212.0 275.2,211.5 275.4,211.0 275.7,210.5 275.9,210.0 276.2,209.5 276.4,209.0 276.7,208.5 276.9,208.0 277.2,207.5 277.5,207.0 277.7,206.5 278.0,206.0 278.3,205.5 278.6,205.1 278.9,204.6 279.2,204.1 279.4,203.6 279.7,203.2 280.0,202.7 280.4,202.2 280.7,201.8 281.0,201.3 281.3,200.8 281.6,200.4 281.9,199.9 282.2,199.5 282.6,199.0 282.9,198.6 283.2,198.1 283.6,197.7 283.9,197.3 284.3,196.8 284.6,196.4 285.0,196.0 285.3,195.5 285.7,195.1 286.0,194.7 286.4,194.3 286.8,193.8 287.1,193.4 287.5,193.0 287.9,192.6 288.3,192.2 288.6,191.8 289.0,191.4 289.4,191.0 289.8,190.6 290.2,190.2 290.6,189.9 291.0,189.5 291.4,189.1 291.8,188.7 292.2,188.3 292.6,188.0 293.0,187.6 293.4,187.3 293.9,186.9 294.3,186.5 294.7,186.2 295.1,185.8 295.5,185.5 296.0,185.2 296.4,184.8 296.8,184.5 297.3,184.2 297.7,183.8 298.1,183.5 298.6,183.2 299.0,182.9 299.5,182.6 299.9,182.3 300.4,182.0 300.8,181.7 301.3,181.4 301.7,181.1 302.2,180.8 302.7,180.5 303.1,180.3 303.6,180.0 304.0,179.7 304.5,179.4 305.0,179.2 305.4,178.9 305.9,178.7 306.4,178.4 306.9,178.2 307.3,177.9 307.8,177.7 308.3,177.5 308.8,177.2 309.3,177.0 309.7,176.8 310.2,176.6 310.7,176.4 311.2,176.2 311.7,176.0 312.2,175.8 312.7,175.6 313.2,175.4 313.6,175.2 314.1,175.0 314.6,174.8 315.1,174.7 315.6,174.5 316.1,174.4 316.6,174.2 317.1,174.0 317.6,173.9 318.1,173.7 318.6,173.6 319.1,173.5 319.6,173.3 320.1,173.2 320.6,173.1 321.1,173.0 321.6,172.9 322.1,172.8 322.6,172.7 323.1,172.6 323.6,172.5 324.1,172.4 324.6,172.3 325.1,172.2 325.7,172.1 326.2,172.1 326.7,172.0 327.2,171.9 327.7,171.9 328.2,171.8 328.7,171.8 329.2,171.7 329.7,171.7 330.2,171.7 330.7,171.6 331.2,171.6 331.7,171.6 332.2,171.6 332.7,171.6 333.2,171.6 333.7,171.6 334.2,171.6 334.7,171.6 335.2,171.6 335.7,171.6 336.2,171.7 336.7,171.7 337.2,171.7 337.7,171.8 338.2,171.8 338.7,171.8 339.2,171.9 339.7,172.0 340.1,172.0 340.6,172.1 341.1,172.1 341.6,172.2 342.1,172.3 342.6,172.4 343.1,172.5 343.5,172.6 344.0,172.7 344.5,172.8 345.0,172.9 345.5,173.0 345.9,173.1 346.4,173.2 346.9,173.4 347.4,173.5 347.8,173.6 348.3,173.8 348.8,173.9 349.2,174.1 349.7,174.2 350.1,174.4 350.6,174.5 351.1,174.7 351.5,174.9 352.0,175.0 352.4,175.2 352.9,175.4 353.3,175.6 353.8,175.8 354.2,176.0 354.6,176.2 355.1,176.4 355.5,176.6 355.9,176.8 356.4,177.0 356.8,177.3 357.2,177.5 357.7,177.7 358.1,178.0 358.5,178.2"/><polyline fill="none" stroke="#333333" stroke-width="1" stroke-linejoin="round" points="356.4,192.2 356.7,192.4 357.0,192.6 357.3,192.9 357.6,193.1 357.9,193.4 358.2,193.6 358.5,193.8 358.7,194.1 359.0,194.4 359.3,194.6 359.6,194.9 359.8,195.1 360.1,195.4 360.4,195.7 360.6,196.0 360.9,196.2 361.2,196.5 361.4,196.8 361.7,197.1 361.9,197.4 362.2,197.6 362.4,197.9 362.6,198.2 362.9,198.5 363.1,198.8 363.3,199.1 363.6,199.4 363.8,199.7 364.0,200.1 364.2,200.4 364.5,200.7 364.7,201.0 364.9,201.3 365.1,201.6 365.3,202.0 365.5,202.3 365.7,202.6 365.9,202.9 366.1,203.3 366.3,203.6 366.5,203.9 366.7,204.3 366.9,204.6 367.0,205.0 367.2,205.3 367.4,205.7 367.6,206.0 367.7,206.4 367.9,206.7 368.0,207.1 368.2,207.4 368.4,207.8 368.5,208.2 368.7,208.5 368.8,208.9 368.9,209.2 369.1,209.6 369.2,210.0 369.3,210.4 369.5,210.7 369.6,211.1 369.7,211.5 369.8,211.9 370.0,212.2 370.1,212.6 370.2,213.0 370.3,213.4 370.4,213.8 370.5,214.2 370.6,214.5 370.7,214.9 370.7,215.3 370.8,215.7 370.9,216.1 371.0,216.5 371.1,216.9 371.1,217.3 371.2,217.7 371.3,218.1 371.3,218.5 371.4,218.9 371.4,219.3 371.5,219.7 371.5,220.1 371.6,220.5 371.6,220.9 371.7,221.3 371.7,221.7 371.7,222.1 371.7,222.6 371.8,223.0 371.8,223.4 371.8,223.8 371.8,224.2 371.8,224.6 371.8,225.0 371.8,225.4 371.8,225.8 371.8,226.3 371.8,226.7 371.8,227.1 371.8,227.5 371.8,227.9 371.7,228.3 371.7,228.8 371.7,229.2 371.7,229.6 371.6,230.0 371.6,230.4 371.5,230.8 371.5,231.3 371.4,231.7 371.4,232.1 371.3,232.5 371.3,232.9 371.2,233.4 371.1,233.8 371.1,234.2 371.0,234.6 370.9,235.0 370.8,235.4 370.8,235.9 370.7,236.3 370.6,236.7 370.5,237.1 370.4,237.5 370.3,237.9 370.2,238.4 370.1,238.8 370.0,239.2 369.8,239.6 369.7,240.0 369.6,240.4 369.5,240.8 369.3,241.2 369.2,241.6 369.1,242.1 368.9,242.5 368.8,242.9 368.7,243.3 368.5,243.7 368.4,244.1 368.2,244.5 368.0,244.9 367.9,245.3 367.7,245.7 367.6,246.1 367.4,246.5 367.2,246.9 367.0,247.3 366.9,247.7 366.7,248.1 366.5,248.5 366.3,248.9 366.1,249.3 365.9,249.7 365.7,250.0 365.5,250.4 365.3,250.8 365.1,251.2 364.9,251.6 364.7,252.0 364.5,252.3 364.3,252.7 364.0,253.1 363.8,253.5 363.6,253.8 363.4,254.2 363.1,254.6 362.9,255.0 362.6,255.3 362.4,255.7 362.2,256.0 361.9,256.4 361.7,256.8 361.4,257.1 361.2,257.5 360.9,257.8 360.6,258.2 360.4,258.5 360.1,258.9 359.8,259.2 359.6,259.6 359.3,259.9 359.0,260.3 358.8,260.6 358.5,260.9 358.2,261.3 357.9,261.6 357.6,261.9 357.3,262.2 357.0,262.6 356.7,262.9 356.4,263.2 356.1,263.5 355.8,263.8 355.5,264.1 355.2,264.5 354.9,264.8 354.6,265.1 354.3,265.4 354.0,265.7 353.7,266.0 353.3,266.3 353.0,266.6 352.7,266.8 352.4,267.1 352.0,267.4 351.7,267.7 351.4,268.0 351.1,268.2 350.7,268.5 350.4,268.8 350.0,269.1 349.7,269.3 349.4,269.6 349.0,269.8 348.7,270.1 348.3,270.4 348.0,270.6 347.6,270.8 347.3,271.1 346.9,271.3 346.6,271.6 346.2,271.8 345.8,272.0 345.5,272.3 345.1,272.5 344.8,272.7 344.4,272.9 344.0,273.2 343.7,273.4 343.3,273.6 342.9,273.8 342.6,274.0 342.2,274.2 341.8,274.4 341.4,274.6 341.1,274.8 340.7,275.0 340.3,275.1 339.9,275.3 339.5,275.5 339.2,275.7 338.8,275.9 338.4,276.0 338.0,276.2 337.6,276.3 337.2,276.5 336.9,276.7 336.5,276.8 336.1,277.0 335.7,277.1 335.3,277.2 334.9,277.4 334.5,277.5 334.1,277.7 333.7,277.8 333.3,277.9 332.9,278.0 332.6,278.1 332.2,278.3 331.8,278.4 331.4,278.5"/>
<polyline fill="none" stroke="#ccccff" stroke-width="2.6" stroke-linejoin="round" points="351.7,177.0 352.1,177.2 352.5,177.3 353.0,177.5 353.4,177.7 353.8,177.9 354.2,178.1 354.7,178.3 355.1,178.5 355.5,178.7 355.9,178.9 356.3,179.2 356.7,179.4 357.1,179.6 357.6,179.9 358.0,180.1 358.4,180.3 358.8,180.6 359.1,180.8 359.5,181.1 359.9,181.3 360.3,181.6 360.7,181.9 361.1,182.1 361.5,182.4 361.9,182.7 362.2,183.0 362.6,183.2 363.0,183.5 363.3,183.8 363.7,184.1 364.1,184.4 364.4,184.7 364.8,185.0 365.1,185.3 365.5,185.7 365.8,186.0 366.2,186.3 366.5,186.6 366.8,186.9 367.2,187.3 367.5,187.6 367.8,188.0 368.2,188.3 368.5,188.6 368.8,189.0 369.1,189.3 369.4,189.7 369.7,190.1 370.0,190.4 370.3,190.8 370.6,191.2 370.9,191.5 371.2,191.9 371.5,192.3 371.8,192.7 372.1,193.0 372.4,193.4 372.6,193.8 372.9,194.2 373.2,194.6 373.4,195.0 373.7,195.4 374.0,195.8 374.2,196.2 374.5,196.6 374.7,197.1 375.0,197.5 375.2,197.9 375.4,198.3 375.7,198.7 375.9,199.2 376.1,199.6 376.3,200.0 376.5,200.5 376.8,200.9 377.0,201.4 377.2,201.8 377.4,202.2 377.6,202.7 377.8,203.1 377.9,203.6 378.1,204.0 378.3,204.5 378.5,205.0 378.7,205.4 378.8,205.9 379.0,206.4 379.2,206.8 379.3,207.3 379.5,207.8 379.6,208.2 379.8,208.7 379.9,209.2 380.0,209.7 380.2,210.2 380.3,210.6 380.4,211.1 380.5,211.6 380.7,212.1 380.8,212.6 380.9,213.1 381.0,213.6 381.1,214.1 381.2,214.6 381.3,215.1 381.4,215.6 381.4,216.1 381.5,216.6 381.6,217.1 381.7,217.6 381.7,218.1 381.8,218.6 381.8,219.1 381.9,219.6 382.0,220.1 382.0,220.6 382.0,221.1 382.1,221.6 382.1,222.1 382.1,222.7 382.2,223.2 382.2,223.7 382.2,224.2 382.2,224.7 382.2,225.2 382.2,225.8 382.2,226.3 382.2,226.8 382.2,227.3 382.2,227.8 382.2,228.4 382.1,228.9 382.1,229.4 382.1,229.9 382.0,230.4 382.0,231.0 382.0,231.5 381.9,232.0 381.9,232.5 381.8,233.1 381.7,233.6"/><polyline fill="none" stroke="#ccffff" stroke-width="2.6" stroke-linejoin="round" points="381.7,234.1 381.6,234.6 381.5,235.1 381.4,235.7 381.4,236.2 381.3,236.7 381.2,237.2 381.1,237.8 381.0,238.3 380.9,238.8 380.8,239.3 380.7,239.8 380.6,240.4 380.4,240.9 380.3,241.4 380.2,241.9 380.1,242.4 379.9,243.0 379.8,243.5 379.6,244.0 379.5,244.5 379.3,245.0 379.2,245.5 379.0,246.0 378.8,246.5 378.7,247.1 378.5,247.6 378.3,248.1 378.1,248.6 378.0,249.1 377.8,249.6 377.6,250.1 377.4,250.6 377.2,251.1 377.0,251.6 376.8,252.1 376.6,252.6 376.3,253.1 376.1,253.6 375.9,254.1 375.7,254.6 375.4,255.0 375.2,255.5 375.0,256.0 374.7,256.5 374.5,257.0 374.2,257.5 374.0,257.9 373.7,258.4 373.5,258.9 373.2,259.4 372.9,259.8 372.7,260.3 372.4,260.8 372.1,261.2 371.8,261.7 371.5,262.2 371.3,262.6 371.0,263.1 370.7,263.5 370.4,264.0 370.1,264.4 369.8,264.9 369.5,265.3 369.1,265.7 368.8,266.2 368.5,266.6 368.2,267.1 367.9,267.5 367.5,267.9 367.2,268.3 366.9,268.8 366.5,269.2 366.2,269.6 365.8,270.0 365.5,270.4 365.2,270.8"/><polyline fill="none" stroke="#ccccff" stroke-width="2.6" stroke-linejoin="round" points="364.8,271.3 364.4,271.7 364.1,272.1 363.7,272.5 363.4,272.8 363.0,273.2 362.6,273.6 362.3,274.0 361.9,274.4 361.5,274.8 361.1,275.2 360.7,275.5 360.4,275.9 360.0,276.3 359.6,276.6 359.2,277.0 358.8,277.3 358.4,277.7 358.0,278.1 357.6,278.4 357.2,278.7 356.8,279.1 356.4,279.4 355.9,279.8 355.5,280.1 355.1,280.4 354.7,280.7 354.3,281.1 353.8,281.4 353.4,281.7 353.0,282.0 352.6,282.3 352.1,282.6 351.7,282.9 351.3,283.2 350.8,283.5 350.4,283.8 349.9,284.0 349.5,284.3 349.1,284.6 348.6,284.9 348.2,285.1 347.7,285.4 347.3,285.6 346.8,285.9"/><polyline fill="none" stroke="#ccffff" stroke-width="2.4" stroke-linejoin="round" points="279.2,232.9 279.3,232.4 279.3,232.0 279.4,231.6 279.4,231.1 279.5,230.7 279.6,230.3 279.6,229.8 279.7,229.4 279.8,229.0 279.9,228.5 280.0,228.1 280.1,227.7 280.2,227.2 280.2,226.8 280.3,226.4 280.5,225.9 280.6,225.5 280.7,225.1 280.8,224.7 280.9,224.2 281.0,223.8 281.1,223.4 281.3,222.9 281.4,222.5 281.5,222.1 281.7,221.7 281.8,221.3 282.0,220.8 282.1,220.4 282.3,220.0 282.4,219.6 282.6,219.2 282.7,218.7 282.9,218.3 283.1,217.9 283.3,217.5 283.4,217.1 283.6,216.7 283.8,216.3 284.0,215.8 284.2,215.4 284.4,215.0 284.5,214.6 284.7,214.2 284.9,213.8 285.2,213.4 285.4,213.0 285.6,212.6 285.8,212.2 286.0,211.8 286.2,211.4 286.4,211.0 286.7,210.6 286.9,210.3 287.1,209.9 287.4,209.5 287.6,209.1 287.8,208.7 288.1,208.3 288.3,208.0 288.6,207.6 288.8,207.2 289.1,206.8 289.3,206.5 289.6,206.1 289.9,205.7 290.1,205.4 290.4,205.0 290.7,204.6 290.9,204.3 291.2,203.9 291.5,203.6 291.8,203.2 292.1,202.9 292.4,202.5 292.6,202.2 292.9,201.8 293.2,201.5 293.5,201.1 293.8,200.8 294.1,200.5 294.4,200.1"/><polyline fill="none" stroke="#ccccff" stroke-width="2.4" stroke-linejoin="round" points="282.8,257.9 282.7,257.5 282.5,257.2 282.4,256.8 282.2,256.4 282.1,256.0 281.9,255.7 281.8,255.3 281.6,254.9 281.5,254.5 281.4,254.1 281.2,253.7 281.1,253.3 281.0,253.0 280.9,252.6 280.7,252.2 280.6,251.8 280.5,251.4 280.4,251.0 280.3,250.6 280.2,250.2 280.1,249.8 280.0,249.4 279.9,249.0 279.8,248.5 279.8,248.1 279.7,247.7 279.6,247.3 279.5,246.9 279.5,246.5 279.4,246.1 279.4,245.7 279.3,245.2 279.2,244.8 279.2,244.4 279.1,244.0 279.1,243.6 279.1,243.1 279.0,242.7 279.0,242.3 279.0,241.9 278.9,241.4 278.9,241.0 278.9,240.6 278.9,240.2 278.9,239.7 278.9,239.3 278.9,238.9 278.9,238.5 278.9,238.0 278.9,237.6 278.9,237.2 278.9,236.7 278.9,236.3 279.0,235.9 279.0,235.4 279.0,235.0 279.0,234.6 279.1,234.1 279.1,233.7 279.2,233.3"/><polyline fill="none" stroke="#ccccff" stroke-width="2.4" stroke-linejoin="round" points="294.7,199.8 295.1,199.5 295.4,199.2 295.7,198.8 296.0,198.5 296.3,198.2 296.6,197.9 297.0,197.6 297.3,197.3 297.6,197.0 297.9,196.6 298.3,196.3 298.6,196.0 299.0,195.8 299.3,195.5 299.6,195.2 300.0,194.9 300.3,194.6 300.7,194.3 301.0,194.0 301.4,193.8 301.7,193.5 302.1,193.2 302.4,193.0 302.8,192.7 303.1,192.4 303.5,192.2 303.9,191.9 304.2,191.7 304.6,191.4 305.0,191.2 305.3,190.9 305.7,190.7 306.1,190.4 306.5,190.2 306.8,190.0 307.2,189.8 307.6,189.5 308.0,189.3 308.4,189.1 308.7,188.9 309.1,188.7 309.5,188.5 309.9,188.3 310.3,188.1 310.7,187.9 311.1,187.7 311.5,187.5 311.8,187.3"/><polyline fill="none" stroke="#ccccff" stroke-width="2.0" stroke-linejoin="round" points="322.4,183.7 322.8,183.6 323.2,183.5 323.6,183.4 324.0,183.3 324.4,183.2 324.8,183.2 325.2,183.1 325.7,183.0 326.1,183.0 326.5,182.9 326.9,182.9 327.3,182.8 327.7,182.8 328.1,182.7 328.6,182.7 329.0,182.7 329.4,182.6 329.8,182.6 330.2,182.6 330.6,182.6 331.0,182.5 331.4,182.5 331.8,182.5 332.3,182.5 332.7,182.5 333.1,182.5 333.5,182.5 333.9,182.5"/><polyline fill="none" stroke="#999999" stroke-width="2.6" stroke-linejoin="round" points="333.1,182.6 333.5,182.6 333.9,182.6 334.3,182.6 334.7,182.7 335.1,182.7 335.5,182.7 335.9,182.7 336.3,182.8 336.7,182.8 337.1,182.8 337.5,182.9 337.9,182.9 338.3,183.0 338.7,183.0 339.1,183.1 339.5,183.2 339.9,183.2 340.3,183.3 340.7,183.4"/><polyline fill="none" stroke="#669999" stroke-width="2.6" stroke-linejoin="round" points="341.1,183.5 341.5,183.5 341.9,183.6 342.2,183.7 342.6,183.8 343.0,183.9 343.4,184.0 343.8,184.1 344.2,184.2 344.5,184.3 344.9,184.4 345.3,184.6 345.7,184.7 346.1,184.8 346.4,184.9 346.8,185.1 347.2,185.2 347.5,185.3 347.9,185.5 348.3,185.6 348.6,185.8 349.0,185.9"/><polyline fill="none" stroke="#666699" stroke-width="2.6" stroke-linejoin="round" points="349.4,186.1 349.7,186.3 350.1,186.4 350.4,186.6 350.8,186.8 351.1,186.9 351.5,187.1 351.8,187.3 352.2,187.5 352.5,187.7 352.9,187.9 353.2,188.1 353.5,188.3 353.9,188.5 354.2,188.7 354.5,188.9 354.9,189.1 355.2,189.3 355.5,189.5 355.8,189.7"/><polyline fill="none" stroke="#999999" stroke-width="2.6" stroke-linejoin="round" points="356.1,190.0 356.5,190.2 356.8,190.4 357.1,190.7 357.4,190.9 357.7,191.1 358.0,191.4 358.3,191.6 358.6,191.9 358.9,192.1 359.2,192.4 359.5,192.6 359.8,192.9 360.1,193.2 360.4,193.4 360.7,193.7 360.9,194.0 361.2,194.3 361.5,194.5 361.8,194.8 362.0,195.1 362.3,195.4 362.6,195.7 362.8,196.0 363.1,196.3 363.3,196.6 363.6,196.9 363.8,197.2 364.1,197.5 364.3,197.8 364.6,198.1 364.8,198.4"/><polyline fill="none" stroke="#669999" stroke-width="2.6" stroke-linejoin="round" points="365.1,198.7 365.3,199.1 365.5,199.4 365.7,199.7 366.0,200.0 366.2,200.4 366.4,200.7 366.6,201.0 366.8,201.4 367.0,201.7 367.2,202.1 367.4,202.4 367.6,202.7 367.8,203.1 368.0,203.4 368.2,203.8 368.4,204.2 368.6,204.5 368.8,204.9 369.0,205.2 369.1,205.6 369.3,206.0 369.5,206.3 369.6,206.7 369.8,207.1 369.9,207.4"/><polyline fill="none" stroke="#666699" stroke-width="2.6" stroke-linejoin="round" points="370.1,207.8 370.2,208.2 370.4,208.6 370.5,209.0 370.7,209.3 370.8,209.7 370.9,210.1 371.1,210.5 371.2,210.9 371.3,211.3 371.4,211.7 371.6,212.1 371.7,212.5 371.8,212.9 371.9,213.3 372.0,213.7 372.1,214.1 372.2,214.5 372.3,214.9 372.4,215.3 372.5,215.7 372.5,216.1 372.6,216.5 372.7,216.9 372.8,217.3 372.8,217.7 372.9,218.1 373.0,218.6 373.0,219.0 373.1,219.4 373.1,219.8 373.2,220.2 373.2,220.7 373.2,221.1 373.3,221.5 373.3,221.9 373.3,222.3 373.4,222.8 373.4,223.2 373.4,223.6 373.4,224.0"/><polyline fill="none" stroke="#000000" stroke-width="1" stroke-linejoin="round" points="338.4,184.7 338.8,184.8 339.1,184.8 339.5,184.9 339.9,185.0 340.3,185.0 340.7,185.1 341.0,185.2 341.4,185.3 341.8,185.3 342.1,185.4 342.5,185.5 342.9,185.6 343.3,185.7 343.6,185.8 344.0,185.9 344.4,186.0 344.7,186.2 345.1,186.3 345.4,186.4 345.8,186.5 346.2,186.6 346.5,186.8 346.9,186.9 347.2,187.0 347.6,187.2 347.9,187.3 348.3,187.5 348.6,187.6 349.0,187.8 349.3,187.9 349.7,188.1 350.0,188.3 350.3,188.4 350.7,188.6 351.0,188.8 351.3,189.0 351.7,189.1 352.0,189.3 352.3,189.5 352.6,189.7 353.0,189.9 353.3,190.1 353.6,190.3 353.9,190.5 354.2,190.7 354.5,190.9 354.9,191.1 355.2,191.3 355.5,191.6 355.8,191.8 356.1,192.0 356.4,192.2 356.7,192.5 357.0,192.7 357.3,192.9 357.5,193.2 357.8,193.4 358.1,193.7 358.4,193.9 358.7,194.2 359.0,194.4 359.2,194.7 359.5,195.0 359.8,195.2 360.0,195.5 360.3,195.8 360.6,196.0 360.8,196.3 361.1,196.6 361.3,196.9 361.6,197.1 361.8,197.4 362.1,197.7 362.3,198.0 362.6,198.3 362.8,198.6 363.0,198.9 363.3,199.2 363.5,199.5 363.7,199.8 363.9,200.1 364.2,200.4 364.4,200.7 364.6,201.1 364.8,201.4 365.0,201.7 365.2,202.0 365.4,202.3 365.6,202.7 365.8,203.0 366.0,203.3 366.2,203.7 366.4,204.0 366.6,204.3 366.8,204.7 366.9,205.0 367.1,205.4 367.3,205.7 367.5,206.1 367.6,206.4 367.8,206.8 368.0,207.1 368.1,207.5 368.3,207.8 368.4,208.2 368.6,208.6 368.7,208.9 368.8,209.3 369.0,209.7 369.1,210.0 369.3,210.4 369.4,210.8 369.5,211.1 369.6,211.5 369.7,211.9 369.9,212.3 370.0,212.7 370.1,213.0 370.2,213.4 370.3,213.8 370.4,214.2 370.5,214.6 370.6,215.0 370.7,215.4 370.7,215.7 370.8,216.1 370.9,216.5 371.0,216.9 371.0,217.3 371.1,217.7 371.2,218.1 371.2,218.5 371.3,218.9 371.3,219.3 371.4,219.7 371.4,220.1 371.5,220.5 371.5,220.9 371.6,221.3 371.6,221.7 371.6,222.2 371.6,222.6 371.7,223.0 371.7,223.4 371.7,223.8"/>
<polygon points="284.5,264 311,264 284.5,285" fill="#99cccc"/>
<g clip-path="url(#ck)">
<polygon fill="#333366" points="255.0,-47.0 450.0,70.0 450.0,330.0 255.0,213.0"/>
<polygon fill="#336666" points="255.0,213.0 450.0,330.0 450.0,334.0 255.0,217.0"/>
<polygon fill="#666666" points="255.0,217.0 450.0,334.0 450.0,348.5 255.0,231.5"/>
<polygon fill="#666699" points="255.0,231.5 450.0,348.5 450.0,360.0 255.0,243.0"/>
<polygon fill="#669999" points="255.0,243.0 450.0,360.0 450.0,383.0 255.0,266.0"/>
<polygon fill="#999999" points="255.0,266.0 450.0,383.0 450.0,570.0 255.0,453.0"/>
</g>
<polyline fill="none" stroke="#ccccff" stroke-width="2.6" points="311,263.5 291,279"/>
<polyline fill="none" stroke="#ccffff" stroke-width="2.6" points="291,279 285,284"/>
</svg>
<!-- /OBJ -->
<div class="a" style="left:199px;top:117px;width:1px;height:473px;background:#cccccc"></div>
<div class="a" style="left:200px;top:292px;width:6px;height:50px;background:#ccccff"></div>
<div class="a" style="left:206px;top:342px;width:6px;height:50px;background:#ccccff"></div>
<svg style="left:0;top:0" width="635" height="591" shape-rendering="crispEdges">
<path d="M204,314l-2,3l2,3" fill="none" stroke="#666699" stroke-width="1.3"/>
<path d="M208,364l2,3.5l-2,3.5" fill="none" stroke="#666699" stroke-width="1.3"/>
<!-- hourglass -->
<rect x="433" y="191" width="13" height="3" fill="#000"/><rect x="434" y="192" width="11" height="1" fill="#fff"/>
<rect x="433" y="210" width="13" height="3" fill="#000"/><rect x="434" y="211" width="11" height="1" fill="#fff"/>
<polygon points="434,194 445,194 445,198 441.5,202 445,206 445,210 434,210 434,206 437.5,202 434,198" fill="#000"/>
<polygon points="435,194 444,194 444,197.5 440.5,201.5 440.5,202.5 444,206.5 444,210 435,210 435,206.5 438.5,202.5 438.5,201.5 435,197.5" fill="#fff"/>
<g fill="#000"><rect x="437" y="196" width="1" height="1"/><rect x="439" y="196" width="1" height="1"/><rect x="441" y="196" width="1" height="1"/><rect x="438" y="197" width="1" height="1"/><rect x="440" y="197" width="1" height="1"/><rect x="439" y="198" width="1" height="1"/><rect x="439" y="200" width="1" height="1"/><rect x="439" y="203" width="1" height="1"/><rect x="439" y="205" width="1" height="1"/><rect x="438" y="206" width="1" height="1"/><rect x="440" y="206" width="1" height="1"/><rect x="437" y="207" width="1" height="1"/><rect x="439" y="207" width="1" height="1"/><rect x="441" y="207" width="1" height="1"/><rect x="436" y="208" width="1" height="1"/><rect x="438" y="208" width="1" height="1"/><rect x="440" y="208" width="1" height="1"/><rect x="442" y="208" width="1" height="1"/><rect x="435" y="209" width="1" height="1"/><rect x="437" y="209" width="1" height="1"/><rect x="439" y="209" width="1" height="1"/><rect x="441" y="209" width="1" height="1"/><rect x="443" y="209" width="1" height="1"/></g>
</svg>
<!-- borders -->
<div class="a" style="left:0;top:0;width:1px;height:591px;background:#000"></div>
<div class="a" style="left:634px;top:0;width:1px;height:591px;background:#000"></div>
<div class="a" style="left:0;top:590px;width:635px;height:1px;background:#000"></div>
</body></html>
